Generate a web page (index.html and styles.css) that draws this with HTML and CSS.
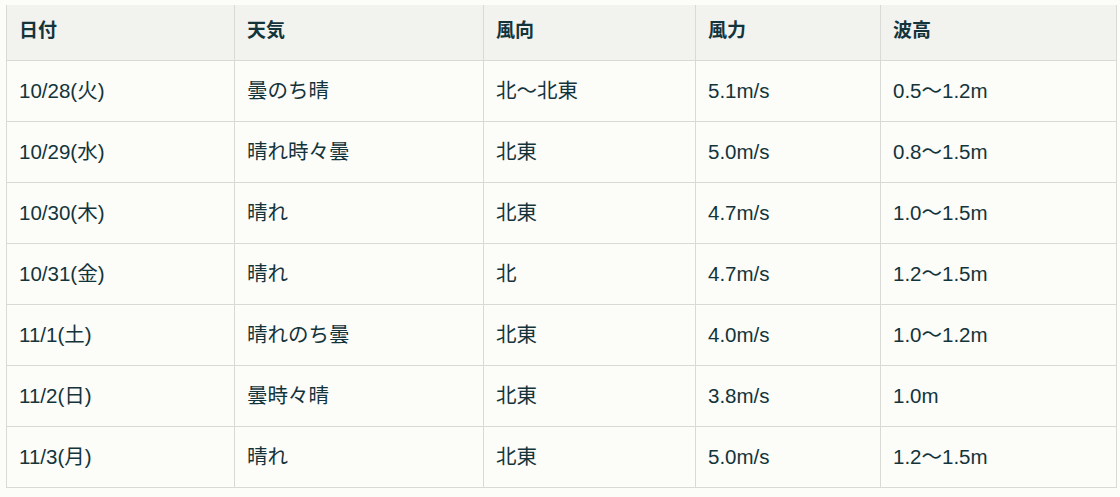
FILE: index.html
```html
<!DOCTYPE html>
<html lang="ja">
<head>
<meta charset="utf-8">
<link rel="stylesheet" href="styles.css">
</head>
<body>
<table class="forecast">
  <colgroup>
    <col class="c1"><col class="c2"><col class="c3"><col class="c4"><col class="c5">
  </colgroup>
  <thead>
    <tr><th>日付</th><th>天気</th><th>風向</th><th>風力</th><th>波高</th></tr>
  </thead>
  <tbody>
    <tr><td>10/28(火)</td><td>曇のち晴</td><td>北〜北東</td><td>5.1m/s</td><td>0.5〜1.2m</td></tr>
    <tr><td>10/29(水)</td><td>晴れ時々曇</td><td>北東</td><td>5.0m/s</td><td>0.8〜1.5m</td></tr>
    <tr><td>10/30(木)</td><td>晴れ</td><td>北東</td><td>4.7m/s</td><td>1.0〜1.5m</td></tr>
    <tr><td>10/31(金)</td><td>晴れ</td><td>北</td><td>4.7m/s</td><td>1.2〜1.5m</td></tr>
    <tr><td>11/1(土)</td><td>晴れのち曇</td><td>北東</td><td>4.0m/s</td><td>1.0〜1.2m</td></tr>
    <tr><td>11/2(日)</td><td>曇時々晴</td><td>北東</td><td>3.8m/s</td><td>1.0m</td></tr>
    <tr><td>11/3(月)</td><td>晴れ</td><td>北東</td><td>5.0m/s</td><td>1.2〜1.5m</td></tr>
  </tbody>
</table>
</body>
</html>
```

FILE: styles.css
```css
html, body {
  margin: 0;
  background: #fcfcf9;
}
body {
  padding: 5px 4px 0 6px;
  font-family: "Liberation Sans", "Noto Sans CJK JP", sans-serif;
  color: #13343b;
}
.forecast {
  width: 1110px;
  border-collapse: collapse;
  table-layout: fixed;
  font-size: 20.5px;
  line-height: 24px;
}
.c1 { width: 228px; }
.c2 { width: 249px; }
.c3 { width: 212px; }
.c4 { width: 185px; }
.c5 { width: 236px; }
.forecast th,
.forecast td {
  text-align: left;
  padding: 0 12px;
  border: 1px solid #d9d9d6;
  white-space: nowrap;
}
.forecast thead th {
  border-top: none;
  background: #f2f2ef;
  font-weight: bold;
  font-size: 19px;
  height: 51px;
  padding-bottom: 4px;
}
.forecast td {
  height: 59px;
  font-weight: normal;
  padding-bottom: 1px;
}
```
